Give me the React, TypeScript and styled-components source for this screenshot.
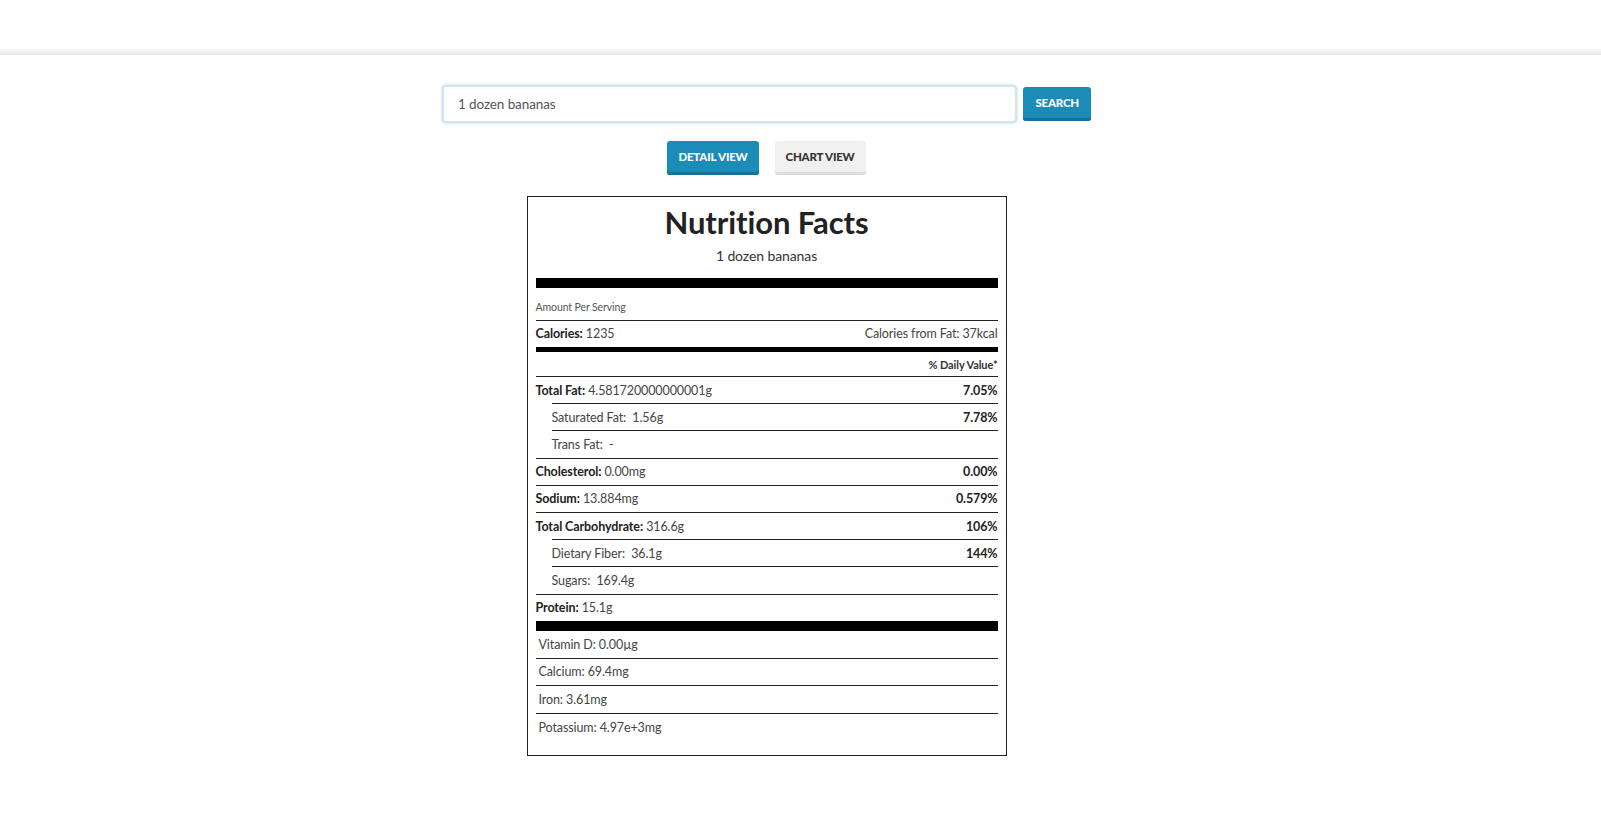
import styled, { createGlobalStyle } from 'styled-components';

const GlobalStyle = createGlobalStyle`
    html, body {
        margin: 0;
        padding: 0;
        background: #fff;
    }
    body {
        font-family: Lato, 'Liberation Sans', sans-serif;
        color: #333;
    }
    * {
        box-sizing: border-box;
    }
`;

interface Nutrient {
    label: string;
    value: string;
    dv?: string;
    sub?: boolean;
}

const nutrients: Nutrient[] = [
    { label: 'Total Fat:', value: '4.581720000000001g', dv: '7.05%' },
    { label: 'Saturated Fat:', value: '1.56g', dv: '7.78%', sub: true },
    { label: 'Trans Fat:', value: '-', sub: true },
    { label: 'Cholesterol:', value: '0.00mg', dv: '0.00%' },
    { label: 'Sodium:', value: '13.884mg', dv: '0.579%' },
    { label: 'Total Carbohydrate:', value: '316.6g', dv: '106%' },
    { label: 'Dietary Fiber:', value: '36.1g', dv: '144%', sub: true },
    { label: 'Sugars:', value: '169.4g', sub: true },
    { label: 'Protein:', value: '15.1g' },
];

const vitamins = ['Vitamin D: 0.00µg', 'Calcium: 69.4mg', 'Iron: 3.61mg', 'Potassium: 4.97e+3mg'];

function App() {
    return (
        <>
            <GlobalStyle />
            <TopBar />
            <Main>
                <SearchRow>
                    <SearchInput defaultValue="1 dozen bananas" />
                    <Button $primary $pad={12}>
                        Search
                    </Button>
                </SearchRow>
                <ViewRow>
                    <Button $primary>Detail View</Button>
                    <Button>Chart View</Button>
                </ViewRow>
                <Label>
                    <Title>Nutrition Facts</Title>
                    <Subtitle>1 dozen bananas</Subtitle>
                    <Bar $size={10} $gap={12} />
                    <ServingRow>Amount Per Serving</ServingRow>
                    <CalorieRow>
                        <span>
                            <b>Calories:</b> 1235
                        </span>
                        <span>Calories from Fat: 37kcal</span>
                    </CalorieRow>
                    <Bar $size={5} />
                    <DailyRow>% Daily Value*</DailyRow>
                    {nutrients.map((n) => (
                        <NutrientRow key={n.label} $sub={n.sub}>
                            <span>
                                {n.sub ? (
                                    <SubLabel>
                                        {n.label}&nbsp; {n.value}
                                    </SubLabel>
                                ) : (
                                    <>
                                        <b>{n.label}</b> {n.value}
                                    </>
                                )}
                            </span>
                            {n.dv && <b>{n.dv}</b>}
                        </NutrientRow>
                    ))}
                    <Bar $size={10} />
                    {vitamins.map((v, i) => (
                        <VitaminRow key={v} $first={i === 0}>
                            {v}
                        </VitaminRow>
                    ))}
                </Label>
            </Main>
        </>
    );
}

export default App;

/** 상단 네비게이션 바 */
const TopBar = styled.header`
    height: 55px;
    background: linear-gradient(to bottom, #fff 0, #fff 48px, #f6f6f6 49px, #ececec 54px);
    border-bottom: 1px solid #e4e4e4;
`;

/** 본문 영역 */
const Main = styled.main`
    display: flex;
    flex-direction: column;
    align-items: center;
    padding: 30px 68px 40px 0;
`;

const SearchRow = styled.div`
    display: flex;
    align-items: center;
    gap: 6px;
    width: 649px;
`;

const SearchInput = styled.input`
    flex: 1;
    height: 38px;
    padding: 0 14px;
    border: 2px solid #cfe4ee;
    border-radius: 4px;
    box-shadow: 0 0 3px rgba(120, 170, 195, 0.45);
    font-family: Lato, 'Liberation Sans', sans-serif;
    font-size: 13.5px;
    letter-spacing: -0.1px;
    color: #555;
    outline: none;
`;

const Button = styled.button<{ $primary?: boolean; $pad?: number }>`
    height: 34px;
    padding: 0 ${(p) => p.$pad ?? 11}px 3px;
    border: none;
    border-radius: 3px;
    font-family: Lato, 'Liberation Sans', sans-serif;
    font-size: 11.5px;
    font-weight: 900;
    text-transform: uppercase;
    letter-spacing: -0.2px;
    cursor: pointer;
    background: ${(p) => (p.$primary ? '#1b8bb8' : '#f0f0f0')};
    color: ${(p) => (p.$primary ? '#fff' : '#333')};
    box-shadow: inset 0 -3px 0 ${(p) => (p.$primary ? '#14739b' : '#dcdcdc')};
`;

const ViewRow = styled.div`
    display: flex;
    gap: 16px;
    margin-top: 18px;
`;

/** 영양성분 라벨 */
const Label = styled.section`
    width: 480px;
    margin-top: 21px;
    padding: 0 8px 15px;
    border: 1px solid #222;
    font-size: 12.5px;
    letter-spacing: -0.1px;
    color: #444;
`;

const Title = styled.h1`
    margin: 7px 0 0;
    text-align: center;
    font-size: 31px;
    line-height: 36px;
    font-weight: 700;
    color: #222;
`;

const Subtitle = styled.div`
    margin-top: 6px;
    text-align: center;
    font-size: 14px;
    line-height: 20px;
    color: #333;
`;

const Bar = styled.div<{ $size: number; $gap?: number }>`
    height: ${(p) => p.$size}px;
    margin-top: ${(p) => p.$gap ?? 0}px;
    background: #000;
`;

const ServingRow = styled.div`
    padding: 12px 0 5px;
    font-size: 10.5px;
    line-height: 15px;
    color: #555;
    border-bottom: 1px solid #222;
`;

const CalorieRow = styled.div`
    display: flex;
    justify-content: space-between;
    align-items: center;
    height: 26px;
    padding-bottom: 1px;
    b {
        color: #222;
    }
`;

const DailyRow = styled.div`
    height: 24px;
    display: flex;
    align-items: center;
    justify-content: flex-end;
    font-size: 11px;
    font-weight: 700;
    color: #333;
`;

const NutrientRow = styled.div<{ $sub?: boolean }>`
    display: flex;
    justify-content: space-between;
    align-items: center;
    height: 27.2px;
    margin-left: ${(p) => (p.$sub ? '16px' : '0')};
    border-top: 1px solid #222;
    b {
        color: #222;
    }
`;

const SubLabel = styled.span`
    color: #444;
`;

const VitaminRow = styled.div<{ $first?: boolean }>`
    display: flex;
    align-items: center;
    height: ${(p) => (p.$first ? '27px' : '27.6px')};
    padding-left: 3px;
    border-top: ${(p) => (p.$first ? 'none' : '1px solid #222')};
`;
